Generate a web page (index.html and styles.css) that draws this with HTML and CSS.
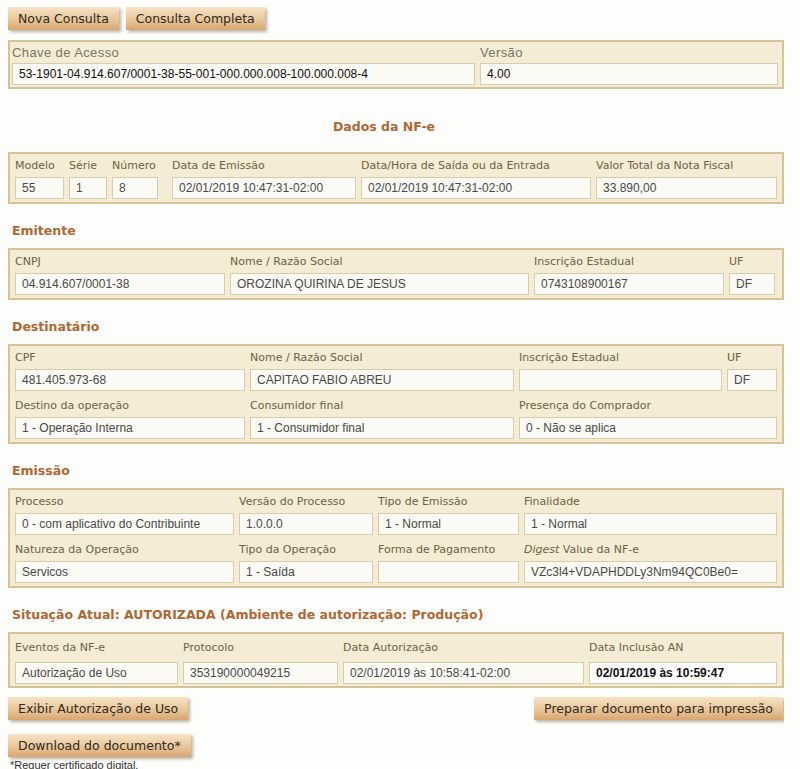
FILE: index.html
```html
<!DOCTYPE html>
<html lang="pt-BR">
<head>
  <meta charset="UTF-8">
  <title>Consulta NF-e</title>
  <link rel="stylesheet" href="styles.css">
</head>
<body>

<div class="toolbar">
  <button class="btn">Nova Consulta</button>
  <button class="btn">Consulta Completa</button>
</div>

<div class="box key">
  <div class="field">
    <label>Chave de Acesso</label>
    <span class="val">53-1901-04.914.607/0001-38-55-001-000.000.008-100.000.008-4</span>
  </div>
  <div class="field">
    <label>Versão</label>
    <span class="val">4.00</span>
  </div>
</div>

<h2 class="center">Dados da NF-e</h2>
<div class="box grid nfe">
  <div class="field"><label>Modelo</label><span class="val">55</span></div>
  <div class="field"><label>Série</label><span class="val">1</span></div>
  <div class="field"><label>Número</label><span class="val short">8</span></div>
  <div class="field"><label>Data de Emissão</label><span class="val">02/01/2019 10:47:31-02:00</span></div>
  <div class="field"><label>Data/Hora de Saída ou da Entrada</label><span class="val">02/01/2019 10:47:31-02:00</span></div>
  <div class="field"><label>Valor Total da Nota Fiscal</label><span class="val">33.890,00</span></div>
</div>

<h2>Emitente</h2>
<div class="box grid emit">
  <div class="field"><label>CNPJ</label><span class="val">04.914.607/0001-38</span></div>
  <div class="field"><label>Nome / Razão Social</label><span class="val">OROZINA QUIRINA DE JESUS</span></div>
  <div class="field"><label>Inscrição Estadual</label><span class="val">0743108900167</span></div>
  <div class="field"><label>UF</label><span class="val">DF</span></div>
</div>

<h2>Destinatário</h2>
<div class="box grid dest">
  <div class="field"><label>CPF</label><span class="val">481.405.973-68</span></div>
  <div class="field"><label>Nome / Razão Social</label><span class="val">CAPITAO FABIO ABREU</span></div>
  <div class="field"><label>Inscrição Estadual</label><span class="val"></span></div>
  <div class="field"><label>UF</label><span class="val">DF</span></div>
  <div class="field"><label>Destino da operação</label><span class="val">1 - Operação Interna</span></div>
  <div class="field"><label>Consumidor final</label><span class="val">1 - Consumidor final</span></div>
  <div class="field span2"><label>Presença do Comprador</label><span class="val">0 - Não se aplica</span></div>
</div>

<h2>Emissão</h2>
<div class="box grid emis">
  <div class="field"><label>Processo</label><span class="val">0 - com aplicativo do Contribuinte</span></div>
  <div class="field"><label>Versão do Processo</label><span class="val">1.0.0.0</span></div>
  <div class="field"><label>Tipo de Emissão</label><span class="val">1 - Normal</span></div>
  <div class="field"><label>Finalidade</label><span class="val">1 - Normal</span></div>
  <div class="field"><label>Natureza da Operação</label><span class="val">Servicos</span></div>
  <div class="field"><label>Tipo da Operação</label><span class="val">1 - Saída</span></div>
  <div class="field"><label>Forma de Pagamento</label><span class="val"></span></div>
  <div class="field"><label><i>Digest</i> Value da NF-e</label><span class="val">VZc3l4+VDAPHDDLy3Nm94QC0Be0=</span></div>
</div>

<h2>Situação Atual: AUTORIZADA (Ambiente de autorização: Produção)</h2>
<div class="box grid sit">
  <div class="field"><label>Eventos da NF-e</label><span class="val">Autorização de Uso</span></div>
  <div class="field"><label>Protocolo</label><span class="val">353190000049215</span></div>
  <div class="field"><label>Data Autorização</label><span class="val">02/01/2019 às 10:58:41-02:00</span></div>
  <div class="field"><label>Data Inclusão AN</label><span class="val strong">02/01/2019 às 10:59:47</span></div>
</div>

<div class="actions">
  <button class="btn">Exibir Autorização de Uso</button>
  <button class="btn">Preparar documento para impressão</button>
</div>
<div class="actions">
  <button class="btn">Download do documento*</button>
</div>
<p class="note">*Requer certificado digital.</p>

</body>
</html>
```

FILE: styles.css
```css
body { margin: 7px 16px 0 8px; background: #fdfdfb; font-family: "DejaVu Sans", Tahoma, sans-serif; }

.btn {
  font-family: "DejaVu Sans", Tahoma, sans-serif; font-size: 12.5px; color: #2f2a22;
  height: 23px; padding: 0 10px; border: none; border-radius: 0;
  background: linear-gradient(#f6e3c6, #e7c396 60%, #d8a66f);
  box-shadow: 2px 2px 3px #b9b2a4; cursor: pointer;
}
.toolbar { display: flex; gap: 7px; }

.box { background: #f4ecd5; border: 2px solid #d3c597; }
.key { margin-top: 10px; display: grid; grid-template-columns: 463px 298px; gap: 5px; padding: 2px; }
.key label { font-family: "Liberation Sans", Arial, sans-serif; font-size: 13px; letter-spacing: 0.4px; color: #7a7565; line-height: 17px; margin-bottom: 2px; }
.key .val { font-size: 12px; color: #111; }

h2 { font-size: 12.5px; color: #ad6a36; margin: 18px 0 8px 4px; line-height: 18px; }
h2.center { text-align: center; margin: 29px 0 16px 0; padding-right: 24px; }

.grid { display: grid; column-gap: 5px; row-gap: 7px; padding: 4px 3px 3px 5px; }
.nfe { grid-template-columns: 49px 38px 55px 184px 230px 181px; }
.emit { grid-template-columns: 210px 299px 190px 46px; }
.dest { grid-template-columns: 230px 264px 203px 50px; }
.emis { grid-template-columns: 219px 134px 141px 253px; }
.sit { grid-template-columns: 163px 155px 241px 188px; padding-top: 6px; padding-bottom: 2px; }
.sit label { margin-bottom: 6px; }
.span2 { grid-column: span 2; }

.field { display: flex; flex-direction: column; }
label { font-size: 11px; color: #6d6245; line-height: 16px; margin-bottom: 3px; white-space: nowrap; }
.val {
  display: block; height: 20px; line-height: 20px; padding: 0 6px;
  background: #fbfaf4; border: 1px solid #d6cdaa;
  font-family: "Liberation Sans", Arial, sans-serif; font-size: 12px; color: #4a4a4a;
  white-space: nowrap; overflow: hidden;
}
.val.short { width: 32px; }
.val.strong { background: #fff; color: #111; font-weight: bold; }

.actions { display: flex; justify-content: space-between; margin-top: 9px; padding-right: 1px; }
.actions + .actions { margin-top: 14px; }
.note { margin: 2px 0 0 2px; font-family: "Liberation Sans", Arial, sans-serif; font-size: 11px; line-height: 13px; color: #333; }
```
